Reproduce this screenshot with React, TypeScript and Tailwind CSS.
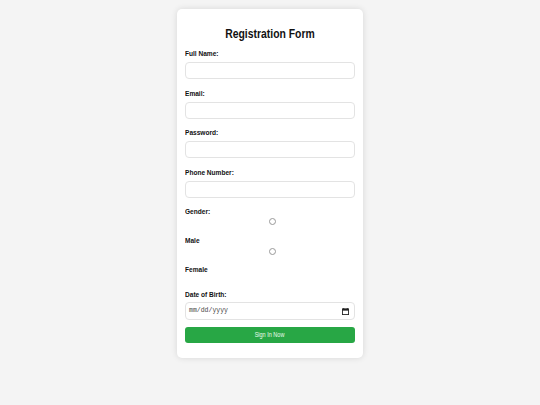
function Label({ text, className = "" }: { text: string; className?: string }) {
  return (
    <label className={"block text-[8px] leading-[10px] font-bold text-[#111] " + className}>
      <span className="inline-block origin-left scale-x-[0.82]">{text}</span>
    </label>
  );
}

function Radio() {
  return (
    <div className="flex justify-center pl-[5px]">
      <span className="block h-[7px] w-[7px] rounded-full border border-[#999] bg-white" />
    </div>
  );
}

export default function App() {
  const fields = [
    { label: "Full Name:", type: "text" },
    { label: "Email:", type: "email" },
    { label: "Password:", type: "password" },
    { label: "Phone Number:", type: "tel" },
  ];

  return (
    <div className="min-h-[405px] w-full bg-[#f4f4f4] pt-[9px] font-['Liberation_Sans',Arial,sans-serif]">
      <div className="mx-auto w-[186px] rounded-[5px] bg-white px-2 pt-[17px] pb-[15px] shadow-[0_0_6px_rgba(0,0,0,0.12)]">
        <h2 className="mb-[7px] text-center text-[13px] leading-[16px] font-bold text-[#111]">
          <span className="inline-block scale-x-[0.8]">Registration Form</span>
        </h2>

        {fields.map((f) => (
          <div key={f.label}>
            <Label text={f.label} />
            <input
              type={f.type}
              className="mt-[3px] mb-[9.5px] block h-[17px] w-full rounded-[4px] border border-[#e3e3e3] bg-white"
            />
          </div>
        ))}

        <Label text="Gender:" />
        <div className="mt-[1px]">
          <Radio />
        </div>
        <Label text="Male" className="mt-[11px]" />
        <div className="mt-[2px]">
          <Radio />
        </div>
        <Label text="Female" className="mt-[10px]" />

        <Label text="Date of Birth:" className="mt-[15px]" />
        <div className="mt-[2px] flex h-[18px] w-full items-center justify-between rounded-[4px] border border-[#e3e3e3] bg-white pr-[5px] pl-[3px]">
          <span className="font-['Liberation_Mono',monospace] text-[6.5px] text-[#444]">mm/dd/yyyy</span>
          <svg width="7" height="7" viewBox="0 0 8 8">
            <rect x="0.5" y="1" width="7" height="6.5" fill="none" stroke="#222" strokeWidth="1" />
            <rect x="0.5" y="1" width="7" height="2" fill="#222" />
            <rect x="1.5" y="0" width="1" height="1.5" fill="#222" />
            <rect x="5.5" y="0" width="1" height="1.5" fill="#222" />
          </svg>
        </div>

        <button className="mt-[7px] block h-[16px] w-full rounded-[3px] bg-[#28a745] text-[6.5px] text-[#eafbea]">
          <span className="inline-block scale-x-[0.85]">Sign In Now</span>
        </button>
      </div>
    </div>
  );
}
